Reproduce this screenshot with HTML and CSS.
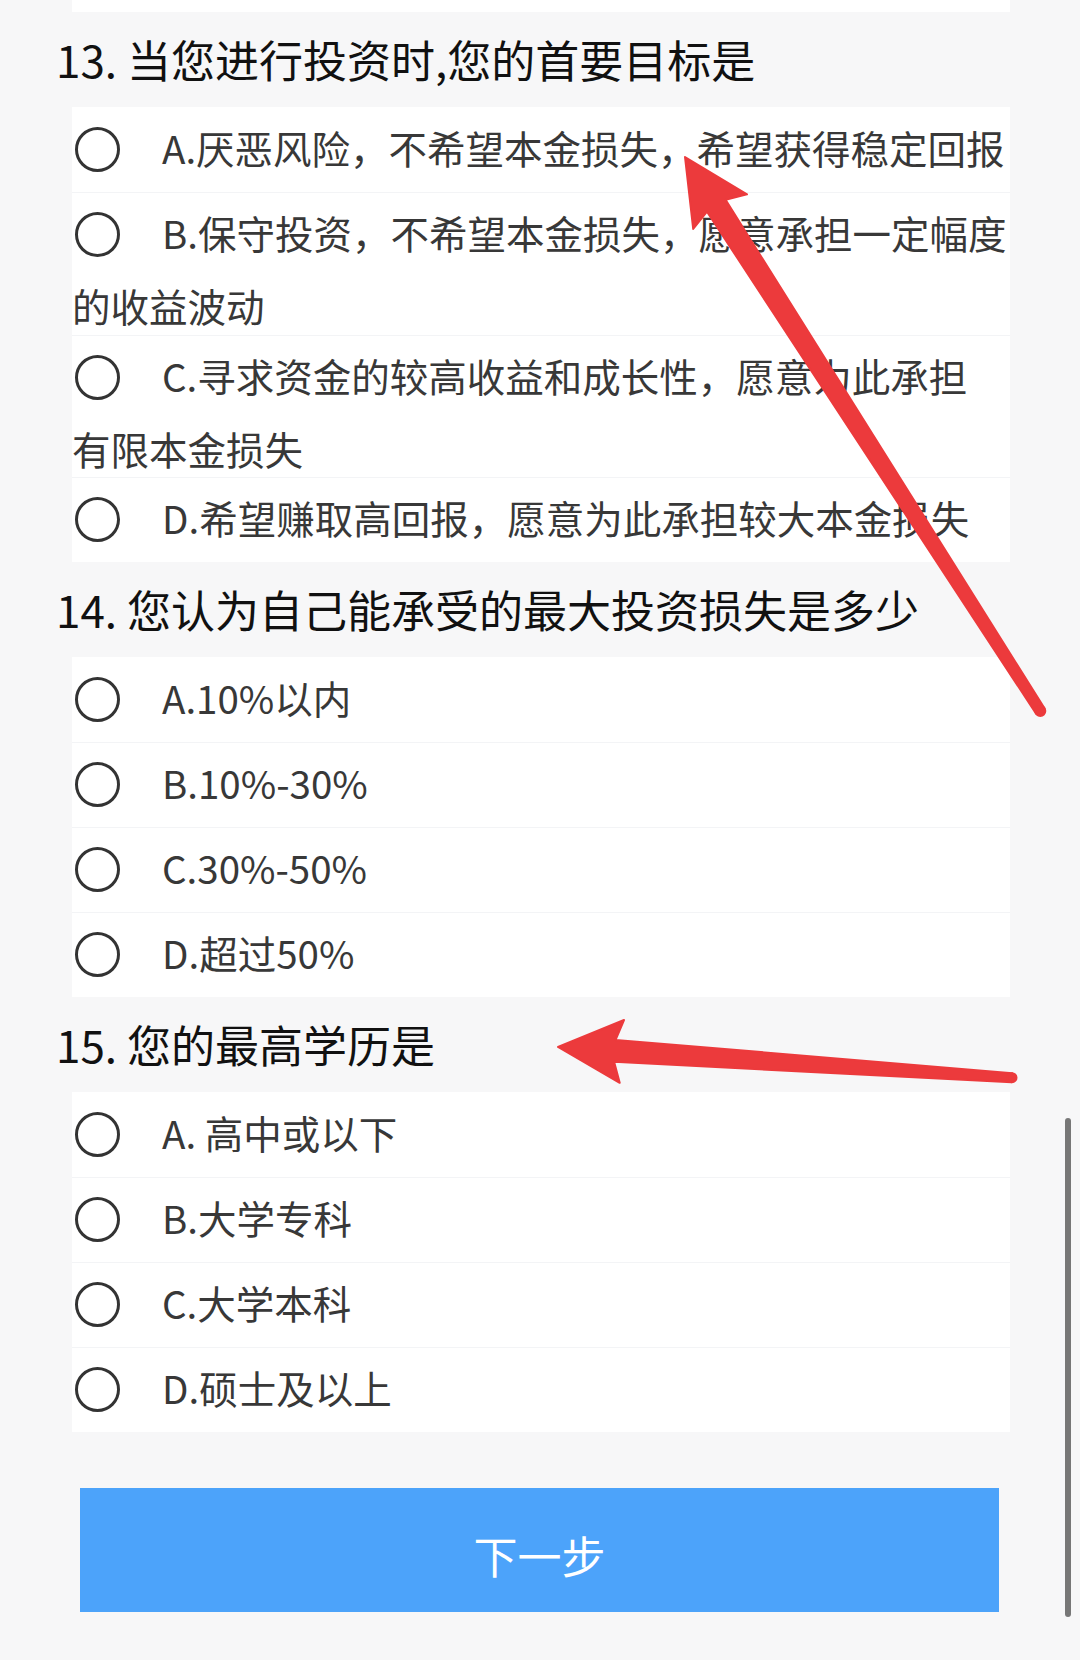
FILE: index.html
```html
<!DOCTYPE html>
<html lang="zh-CN">
<head>
<meta charset="utf-8">
<title>风险测评</title>
<link rel="stylesheet" href="styles.css">
</head>
<body>
<div class="page">
  <div class="card card-tail"></div>

  <section class="question">
    <h2 class="q-title">13. 当您进行投资时,您的首要目标是</h2>
    <div class="card options">
      <label class="option"><span class="radio"></span>A.厌恶风险，不希望本金损失，希望获得稳定回报</label>
      <label class="option"><span class="radio"></span>B.保守投资，不希望本金损失，愿意承担一定幅度的收益波动</label>
      <label class="option"><span class="radio"></span>C.寻求资金的较高收益和成长性，愿意为此承担<br>有限本金损失</label>
      <label class="option"><span class="radio"></span>D.希望赚取高回报，愿意为此承担较大本金损失</label>
    </div>
  </section>

  <section class="question">
    <h2 class="q-title">14. 您认为自己能承受的最大投资损失是多少</h2>
    <div class="card options">
      <label class="option"><span class="radio"></span>A.10%以内</label>
      <label class="option"><span class="radio"></span>B.10%-30%</label>
      <label class="option"><span class="radio"></span>C.30%-50%</label>
      <label class="option"><span class="radio"></span>D.超过50%</label>
    </div>
  </section>

  <section class="question">
    <h2 class="q-title">15. 您的最高学历是</h2>
    <div class="card options">
      <label class="option"><span class="radio"></span>A. 高中或以下</label>
      <label class="option"><span class="radio"></span>B.大学专科</label>
      <label class="option"><span class="radio"></span>C.大学本科</label>
      <label class="option"><span class="radio"></span>D.硕士及以上</label>
    </div>
  </section>

  <div class="actions">
    <button class="next-btn" type="button">下一步</button>
  </div>
</div>

<div class="scrollbar"></div>

<svg class="annotations" width="1080" height="1660" viewBox="0 0 1080 1660" aria-hidden="true">
  <g class="arrow">
    <polygon points="685,157 747,194.4 725.6,199.9 1044.5,708.3 1036.1,713.7 707,211.7 693.2,229"/>
    <circle cx="1040.3" cy="711" r="5"/>
  </g>
  <g class="arrow">
    <polygon points="558,1047 624,1020 615.6,1039.9 1012.3,1073.2 1011.6,1082.2 614.1,1061.8 619.7,1082.8"/>
    <circle cx="1012" cy="1077.7" r="4.5"/>
  </g>
</svg>
</body>
</html>
```
FILE: styles.css
```css
html, body {
  margin: 0;
  padding: 0;
}

body {
  width: 1080px;
  height: 1660px;
  overflow: hidden;
  background: #f7f7f8;
  font-family: "Noto Sans CJK SC", "Noto Sans", sans-serif;
  position: relative;
}

.page {
  display: flex;
  flex-direction: column;
}

.card {
  background: #ffffff;
  margin-left: 72px;
  width: 938px;
}

.card-tail {
  height: 12px;
}

.q-title {
  margin: 0;
  padding-left: 56px;
  height: 95px;
  line-height: 95px;
  font-size: 44px;
  font-weight: 400;
  color: #111111;
  white-space: nowrap;
}

.options {
  display: flex;
  flex-direction: column;
}

.option {
  display: block;
  padding-right: 0;
  font-size: 38.5px;
  line-height: 57.5px;
  color: #383838;
}

.option + .option {
  box-shadow: inset 0 1px 0 #f3f4f6;
}

.radio {
  display: inline-block;
  box-sizing: border-box;
  width: 45px;
  height: 45px;
  border: 3px solid #333333;
  border-radius: 50%;
  margin: 20px 42px 20px 3px;
  vertical-align: -28.5px;
}

.actions {
  padding-top: 56px;
  padding-left: 80px;
}

.next-btn {
  display: flex;
  align-items: center;
  justify-content: center;
  width: 919px;
  height: 124px;
  border: 0;
  padding: 10px 0 0 0;
  background: #4ca3fa;
  color: #ffffff;
  font-family: "Noto Sans CJK SC", "Noto Sans", sans-serif;
  font-size: 44px;
  font-weight: 400;
}

.scrollbar {
  position: absolute;
  left: 1065px;
  top: 1118px;
  width: 6px;
  height: 499px;
  border-radius: 3px;
  background: #777777;
}

.annotations {
  position: absolute;
  left: 0;
  top: 0;
  pointer-events: none;
}

.arrow {
  fill: #ec3a3c;
  stroke: #ec3a3c;
  stroke-width: 2;
  stroke-linejoin: round;
}
```
